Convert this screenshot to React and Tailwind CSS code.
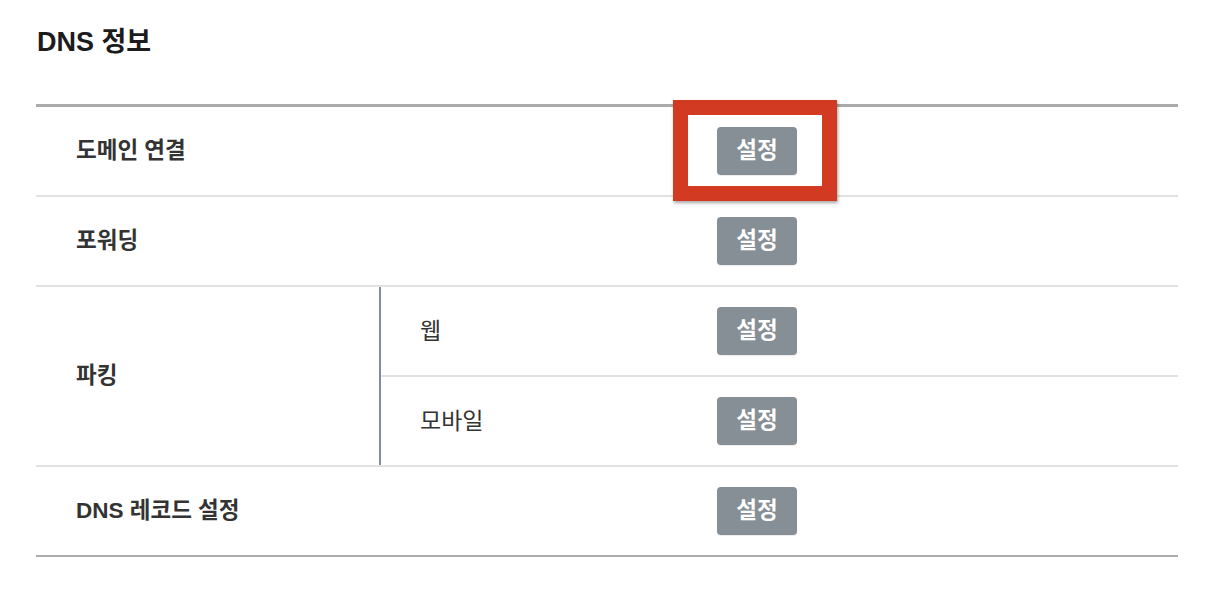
import React from "react";

function Btn() {
  return (
    <button className="w-[80px] h-[48px] rounded-[4px] bg-[#868e96] text-white font-bold text-[22.5px] leading-none shadow-[0_1px_1px_rgba(0,0,0,0.08)]">
      설정
    </button>
  );
}

function Row({ label, last }) {
  return (
    <div className={"flex items-center " + (last ? "h-[88px]" : "h-[90px] border-b-2 border-[#e2e2e2]")}>
      <div className="w-[681px] pl-[40px] font-bold text-[22.5px] text-[#333]">{label}</div>
      <Btn />
    </div>
  );
}

export default function App() {
  return (
    <div
      className="relative w-[1214px] h-[606px] bg-white"
      style={{ fontFamily: '"Liberation Sans", "Noto Sans CJK KR", sans-serif' }}
    >
      <div className="px-[36px] pt-[25px]">
        <h2 className="text-[27px] font-bold leading-[34px] text-[#1c1c1c] pl-[1px]">DNS 정보</h2>
        <div className="mt-[45px] border-t-[3px] border-t-[#ababab] border-b-2 border-b-[#adadad]">
          <Row label="도메인 연결" />
          <Row label="포워딩" />
          <div className="flex border-b-2 border-[#e2e2e2]">
            <div className="w-[343px] pl-[40px] flex items-center font-bold text-[22.5px] text-[#333]">파킹</div>
            <div className="flex-1 border-l-2 border-[#7f8da2]">
              <div className="flex items-center h-[90px] border-b-2 border-[#e2e2e2]">
                <div className="w-[336px] pl-[39px] text-[23px] text-[#333]">웹</div>
                <Btn />
              </div>
              <div className="flex items-center h-[88px]">
                <div className="w-[336px] pl-[39px] text-[23px] text-[#333]">모바일</div>
                <Btn />
              </div>
            </div>
          </div>
          <Row label="DNS 레코드 설정" last />
        </div>
      </div>
      <div className="absolute left-[673px] top-[100px] w-[164px] h-[101px] border-[15px] border-[#d23a21] shadow-[1px_2px_3px_rgba(0,0,0,0.35)]" />
    </div>
  );
}
